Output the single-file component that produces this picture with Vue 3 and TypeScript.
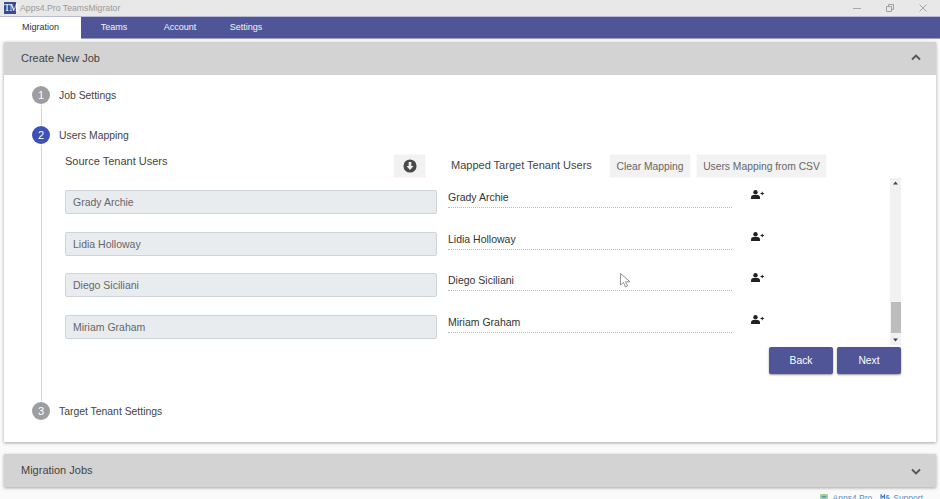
<script setup lang="ts">
const tabs = ['Migration', 'Teams', 'Account', 'Settings']
const users = ['Grady Archie', 'Lidia Holloway', 'Diego Siciliani', 'Miriam Graham']
</script>

<template>
  <div class="app">
    <div class="titlebar">
      <span class="logo">TM</span>
      <span class="app-name">Apps4.Pro TeamsMigrator</span>
      <div class="win-buttons">
        <svg width="8" height="8" viewBox="0 0 8 8"><path d="M0 4.500h8" stroke="#a8a8a8" fill="none" /></svg>
        <svg width="8" height="8" viewBox="0 0 8 8"><path d="M.5 2.500h5v5h-5zM2.500 2.500v-2h5v5h-2" stroke="#a0a0a0" fill="none" /></svg>
        <svg width="8" height="8" viewBox="0 0 8 8"><path d="M.5.500l7 7M7.500.500l-7 7" stroke="#a8a8a8" fill="none" /></svg>
      </div>
    </div>

    <nav class="tabs">
      <a v-for="(tab, i) in tabs" :key="tab" class="tab" :class="{ active: i === 0 }">{{ tab }}</a>
    </nav>

    <section class="panel first">
      <header class="panel-head">
        <span>Create New Job</span>
        <svg class="chevron" width="10" height="7" viewBox="0 0 10 7"><path d="M1 5.500l4-4 4 4" stroke="#555" stroke-width="1.800" fill="none" /></svg>
      </header>

      <div class="panel-body">
        <div class="step-head">
          <span class="circle">1</span>
          <span class="step-label">Job Settings</span>
        </div>
        <div class="step-line short"></div>

        <div class="step-head">
          <span class="circle current">2</span>
          <span class="step-label">Users Mapping</span>
        </div>
        <div class="step-line mapping">
          <div class="mapping-head">
            <div class="source-head">
              <span class="col-title">Source Tenant Users</span>
              <button class="light-btn icon-btn">
                <svg width="14" height="14" viewBox="0 0 16 16">
                  <circle cx="8" cy="8" r="7.500" fill="#4a4a4a" />
                  <path d="M6.500 3.500h3v4.500h2.500l-4 4.500-4-4.500h2.500z" fill="#f2f2f2" />
                </svg>
              </button>
            </div>
            <div class="target-head">
              <span class="col-title">Mapped Target Tenant Users</span>
              <button class="light-btn clear">Clear Mapping</button>
              <button class="light-btn csv">Users Mapping from CSV</button>
            </div>
          </div>

          <div class="list">
            <div class="rows">
              <div v-for="user in users" :key="user" class="row">
                <div class="source-input">{{ user }}</div>
                <div class="target-input">{{ user }}</div>
                <svg class="add-user" width="13" height="9" viewBox="0 0 13 9">
                  <circle cx="4.500" cy="2.200" r="2.200" fill="#222" />
                  <path d="M0 9V7.400C0 6 1 5 2.400 5h4.200C8 5 9 6 9 7.400V9z" fill="#222" />
                  <path d="M9.500 3.500h3.500M11.250 1.800v3.400" stroke="#222" stroke-width="1" fill="none" />
                </svg>
              </div>
            </div>
            <div class="scrollbar">
              <svg width="11" height="11" viewBox="0 0 11 11"><path d="M3 6.500l2.500-3 2.500 3z" fill="#444" /></svg>
              <div class="track"><div class="thumb"></div></div>
              <svg width="11" height="11" viewBox="0 0 11 11"><path d="M3 4.500l2.500 3 2.500-3z" fill="#444" /></svg>
            </div>
          </div>

          <div class="actions">
            <button class="primary">Back</button>
            <button class="primary">Next</button>
          </div>
        </div>

        <div class="step-head">
          <span class="circle">3</span>
          <span class="step-label">Target Tenant Settings</span>
        </div>
      </div>
    </section>

    <section class="panel second">
      <header class="panel-head">
        <span>Migration Jobs</span>
        <svg class="chevron down" width="10" height="7" viewBox="0 0 10 7"><path d="M1 1.500l4 4 4-4" stroke="#555" stroke-width="1.800" fill="none" /></svg>
      </header>
    </section>

    <footer class="links">
      <svg width="8" height="8" viewBox="0 0 9 9"><rect width="9" height="9" fill="#a6d49a" /><rect x="2" y="2" width="5" height="2" fill="#5b8fc9" /></svg>
      <a class="site">Apps4.Pro</a>
      <svg width="10" height="8" viewBox="0 0 11 9"><path d="M1 8V1l2 3 2-3v7M10 2H7.500v2.500H10V7.500H7" stroke="#3f7fd0" stroke-width="1.200" fill="none" /></svg>
      <a>Support</a>
    </footer>

    <svg class="cursor" width="11" height="15" viewBox="0 0 11 15">
      <path d="M.5.500v11.500l3-2.500 2 4.500 2-1-2-4.200h4.500z" fill="#fff" stroke="#777" stroke-width=".8" />
    </svg>
  </div>
</template>

<style>
html,
body {
  margin: 0;
  overflow: hidden;
  background: #fff;
}
</style>

<style scoped>
.app {
  position: relative;
  width: 940px;
  height: 499px;
  overflow: hidden;
  background: #fafafa;
  font-family: "Liberation Sans", Arial, sans-serif;
  color: #444;
}

.titlebar {
  display: flex;
  align-items: center;
  height: 16px;
  background: #e8e8e8;
  padding-left: 4px;
}

.logo {
  width: 12px;
  height: 12px;
  background: #3f4a8c;
  color: #fff;
  font: 10px/12px "Liberation Serif", serif;
  text-align: center;
  letter-spacing: -0.5px;
}

.app-name {
  margin-left: 4px;
  font-size: 8.700px;
  color: #9a9a9a;
}

.win-buttons {
  margin-left: auto;
  display: flex;
  gap: 25px;
  padding-right: 13px;
}

.tabs {
  display: flex;
  height: 21px;
  background: #4f5597;
  border-top: 1px solid #b9bbd6;
  border-bottom: 1px solid #9a9dc6;
}

.tab {
  width: 66px;
  color: #f4f4fa;
  font-size: 9px;
  line-height: 21px;
  text-align: center;
}

.tab.active {
  width: 81px;
  height: 23px;
  background: #fff;
  color: #333;
}

.panel {
  margin: 3px 4px 0;
  background: #fff;
  box-shadow: 0 1px 3px rgba(0, 0, 0, 0.35);
}

.panel.second {
  margin-top: 12px;
}

.panel-head {
  display: flex;
  align-items: center;
  justify-content: space-between;
  height: 31px;
  padding: 0 15px 2px 17px;
  background: #d3d3d3;
  font-size: 11px;
}

.chevron {
  margin-top: -1px;
}

.chevron.down {
  margin-top: 3px;
}

.panel-body {
  padding: 10px 0 21px 28px;
}

.step-head {
  display: flex;
  align-items: center;
  height: 20px;
}

.circle {
  width: 18px;
  height: 18px;
  border-radius: 50%;
  background: #9e9e9e;
  color: #fff;
  font-size: 11px;
  line-height: 18px;
  text-align: center;
}

.circle.current {
  background: #3f51b5;
}

.step-label {
  margin-left: 9px;
  font-size: 10.400px;
}

.step-line {
  margin-left: 9px;
  border-left: 1px solid #d4d4d4;
}

.step-line.short {
  height: 20px;
}

.step-line.mapping {
  box-sizing: border-box;
  height: 256px;
  padding: 10px 0 0 23px;
}

.mapping-head {
  display: flex;
  height: 23px;
}

.source-head {
  display: flex;
  justify-content: space-between;
  width: 360px;
  margin-right: 26px;
}

.target-head {
  display: flex;
  align-items: flex-start;
}

.col-title {
  font-size: 11px;
  line-height: 12px;
}

.target-head .col-title {
  width: 159px;
  line-height: 20px;
}

.light-btn {
  height: 22px;
  padding: 0 6px;
  margin: 0;
  border: 0;
  border-radius: 1px;
  background: #f2f2f2;
  box-shadow: 0 0 1px rgba(0, 0, 0, 0.2);
  font: 10.300px "Liberation Sans", Arial, sans-serif;
  color: #666;
}

.light-btn.clear {
  width: 80px;
  padding: 0;
  margin-right: 7px;
}

.light-btn.csv {
  width: 129px;
  padding: 0;
}

.icon-btn {
  display: flex;
  align-items: center;
  justify-content: center;
  width: 31px;
  padding: 0;
}

.list {
  display: flex;
  width: 836px;
  height: 167px;
}

.rows {
  flex: 1;
  padding-top: 12px;
}

.row {
  display: flex;
  align-items: flex-start;
  height: 41.670px;
}

.source-input {
  box-sizing: border-box;
  width: 372px;
  height: 24px;
  padding-left: 7px;
  background: #e9ecef;
  border: 1px solid #ced4da;
  border-radius: 2px;
  font-size: 10.500px;
  line-height: 23px;
  color: #666;
}

.target-input {
  box-sizing: border-box;
  width: 284px;
  height: 18px;
  margin-left: 11px;
  border-bottom: 1px dotted #bbb;
  font-size: 10.500px;
  line-height: 15px;
  color: #333;
}

.add-user {
  margin-left: 19px;
}

.scrollbar {
  display: flex;
  flex-direction: column;
  width: 11px;
  background: #f1f1f1;
}

.track {
  flex: 1;
  padding-top: 113px;
}

.thumb {
  width: 10px;
  margin-left: 0.500px;
  height: 31px;
  background: #bdbdbd;
}

.actions {
  display: flex;
  justify-content: flex-end;
  gap: 4px;
  width: 836px;
  margin-top: 2px;
}

.primary {
  width: 64px;
  height: 27px;
  padding: 0;
  border: 0;
  border-radius: 2px;
  background: #4f5597;
  color: #fff;
  font: 10.300px "Liberation Sans", Arial, sans-serif;
  box-shadow: 0 1px 2px rgba(0, 0, 0, 0.4);
}

.links {
  display: flex;
  align-items: center;
  justify-content: flex-end;
  gap: 3px;
  height: 10px;
  margin-top: 6px;
  padding-right: 17px;
  font-size: 8.500px;
  color: #5b8fc9;
}

.links svg:first-child {
  margin-right: 2px;
}

.site {
  margin-right: 5px;
}

.cursor {
  position: absolute;
  left: 620px;
  top: 273px;
}
</style>
